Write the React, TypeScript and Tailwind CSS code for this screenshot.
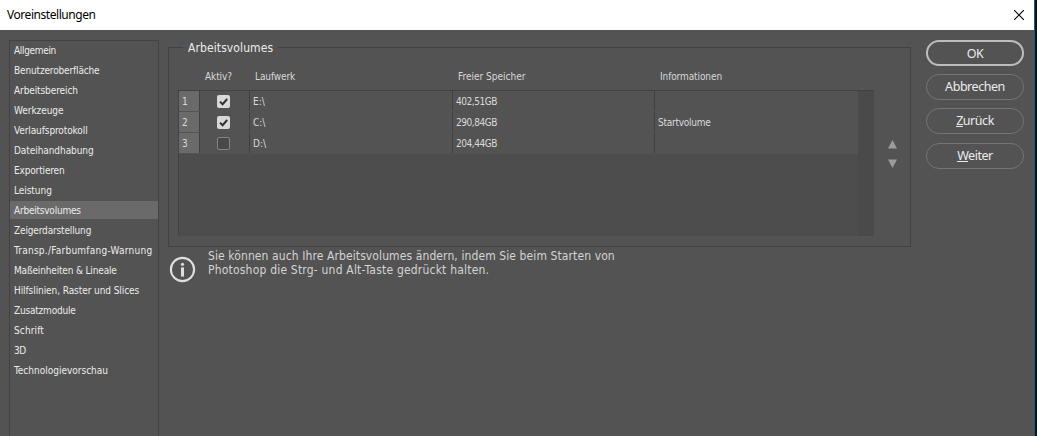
import { useState, type ReactNode } from "react";

type Volume = {
  id: number;
  drive: string;
  free: string;
  info: string;
};

const categories = [
  { name: "Allgemein", tracking: "tracking-[-0.33px]" },
  { name: "Benutzeroberfläche", tracking: "tracking-[-0.15px]" },
  { name: "Arbeitsbereich", tracking: "tracking-[-0.1px]" },
  { name: "Werkzeuge", tracking: "tracking-[-0.05px]" },
  { name: "Verlaufsprotokoll", tracking: "tracking-[-0.1px]" },
  { name: "Dateihandhabung", tracking: "tracking-[-0.07px]" },
  { name: "Exportieren", tracking: "tracking-[-0.15px]" },
  { name: "Leistung", tracking: "tracking-[-0.05px]" },
  { name: "Arbeitsvolumes", tracking: "tracking-[-0.22px]" },
  { name: "Zeigerdarstellung", tracking: "tracking-[-0.15px]" },
  { name: "Transp./Farbumfang-Warnung", tracking: "tracking-[0.25px]" },
  { name: "Maßeinheiten & Lineale", tracking: "tracking-[-0.16px]" },
  { name: "Hilfslinien, Raster und Slices", tracking: "tracking-[-0.08px]" },
  { name: "Zusatzmodule", tracking: "tracking-[-0.2px]" },
  { name: "Schrift", tracking: "tracking-[0.12px]" },
  { name: "3D", tracking: "tracking-[-0.5px]" },
  { name: "Technologievorschau", tracking: "tracking-normal" },
];

const volumes: Volume[] = [
  { id: 1, drive: "E:\\", free: "402,51GB", info: "" },
  { id: 2, drive: "C:\\", free: "290,84GB", info: "Startvolume" },
  { id: 3, drive: "D:\\", free: "204,44GB", info: "" },
];

function Checkbox({ checked, onClick }: { checked: boolean; onClick: () => void }) {
  return (
    <button
      role="checkbox"
      aria-checked={checked}
      onClick={onClick}
      className={`w-[13px] h-[13px] rounded-[2px] ${
        checked ? "bg-[#d8d8d8]" : "bg-[#484848] border border-[#858585]"
      }`}
    >
      {checked && (
        <svg viewBox="0 0 13 13" className="w-[13px] h-[13px]" fill="none" stroke="#303030" strokeWidth="2">
          <path d="M3 6.6 5.6 9.2 10.2 4" />
        </svg>
      )}
    </button>
  );
}

function DialogButton({ primary, children }: { primary?: boolean; children: ReactNode }) {
  return (
    <button
      className={`w-[98px] h-[26px] rounded-full text-center font-['Noto_Sans',sans-serif] text-[12.5px] tracking-[-0.45px] text-[#ececec] ${
        primary ? "border-2 border-[#bdbdbd] leading-[21px]" : "border border-[#747474] leading-[24px]"
      }`}
    >
      {children}
    </button>
  );
}

export default function App() {
  const [selected, setSelected] = useState("Arbeitsvolumes");
  const [active, setActive] = useState<number[]>([1, 2]);

  const toggle = (id: number) =>
    setActive(active.includes(id) ? active.filter((a) => a !== id) : [...active, id]);

  return (
    <div className="flex w-[1037px] h-[436px] overflow-hidden bg-[#06121f] font-['DejaVu_Sans_Condensed','DejaVu_Sans',sans-serif] whitespace-nowrap">
      <div className="w-[1034px] flex flex-col bg-[#535353]">
        {/* Title bar */}
        <div className="h-[30px] shrink-0 bg-white flex items-center justify-between pl-[7px] pr-[10px]">
          <h1 className="text-[12px] tracking-[-0.45px] text-black font-['Noto_Sans',sans-serif]">
            Voreinstellungen
          </h1>
          <button aria-label="Schließen">
            <svg viewBox="0 0 10 10" className="w-[10px] h-[10px]" stroke="#000" strokeWidth="1.1">
              <path d="M0 0 10 10M10 0 0 10" />
            </svg>
          </button>
        </div>

        <div className="flex-1 flex items-start pt-[10px] pl-[9px]">
          {/* Categories */}
          <nav className="w-[150px] h-[400px] shrink-0 border border-[#424242] text-[10px] text-[#ececec]">
            {categories.map(({ name, tracking }) => (
              <button
                key={name}
                onClick={() => setSelected(name)}
                className={`block w-full h-[18px] mb-[2px] pl-[4px] text-left leading-[19px] ${tracking} ${
                  selected === name ? "bg-[#6a6a6a]" : ""
                }`}
              >
                {name}
              </button>
            ))}
          </nav>

          <main className="w-[743px] shrink-0 ml-[9px]">
            <fieldset className="h-[207px] border border-[#424242] pl-[9px]">
              <legend className="ml-[5px] px-[5px] h-[15px] text-[12px] leading-[17px] tracking-[0.1px] text-[#ececec]">
                Arbeitsvolumes
              </legend>
              <div className="flex">
                <div className="w-[696px]">
                  <div className="flex h-[35px] pt-[14px] text-[10px] leading-[16px] tracking-[-0.1px] text-[#d8d8d8]">
                    <span className="w-[77px] pl-[27px]">Aktiv?</span>
                    <span className="w-[203px]">Laufwerk</span>
                    <span className="w-[202px] tracking-normal">Freier Speicher</span>
                    <span>Informationen</span>
                  </div>
                  <div className="h-[146px] flex border-t border-l border-[#424242] bg-[#4d4d4d]">
                    <div className="w-[679px]">
                      {volumes.map((v) => (
                        <div
                          key={v.id}
                          className="flex h-[21px] pb-px bg-[#535353] text-[10px] leading-[21px] text-[#dadada]"
                        >
                          <span className="w-[20px] pl-[3px] bg-[#6a6a6a]">{v.id}</span>
                          <span className="w-[50px] flex items-center border-l border-[#404040] pl-[17px]">
                            <Checkbox checked={active.includes(v.id)} onClick={() => toggle(v.id)} />
                          </span>
                          <span className="w-[203px] border-l border-[#404040] pl-[3px]">{v.drive}</span>
                          <span className="w-[202px] border-l border-[#404040] pl-[3px] tracking-[-0.45px]">
                            {v.free}
                          </span>
                          <span className="flex-1 border-l border-[#404040] pl-[3px] tracking-[-0.25px]">
                            {v.info}
                          </span>
                        </div>
                      ))}
                    </div>
                    <div className="flex-1 bg-[#4a4a4a]" />
                  </div>
                </div>
                <div className="flex flex-col gap-[10px] pl-[14px] pt-[85px]">
                  <svg viewBox="0 0 9 9" className="w-[9px] h-[9px]" fill="#9c9c9c">
                    <path d="M4.5 0 9 8.5H0z" />
                  </svg>
                  <svg viewBox="0 0 9 9" className="w-[9px] h-[9px]" fill="#9c9c9c">
                    <path d="M0 .5H9L4.5 9z" />
                  </svg>
                </div>
              </div>
            </fieldset>

            <div className="flex pl-px">
              <svg viewBox="0 0 27 27" className="w-[27px] h-[27px] mt-[9px]" fill="none">
                <circle cx="13.5" cy="13.5" r="11.6" stroke="#dedede" strokeWidth="2.1" />
                <circle cx="13.5" cy="8.3" r="1.6" fill="#dedede" />
                <path d="M12 11.4h3v9.2h-3z" fill="#dedede" />
              </svg>
              <p className="ml-[12px] mt-[2px] text-[12px] leading-[14px] tracking-[0.1px] text-[#d4d4d4]">
                Sie können auch Ihre Arbeitsvolumes ändern, indem Sie beim Starten von
                <br />
                <span className="tracking-[0.2px]">Photoshop die Strg- und Alt-Taste gedrückt halten.</span>
              </p>
            </div>
          </main>

          <div className="flex flex-col gap-[8px] ml-[15px]">
            <DialogButton primary>OK</DialogButton>
            <DialogButton>Abbrechen</DialogButton>
            <DialogButton>
              <u>Z</u>urück
            </DialogButton>
            <div className="pt-px flex">
              <DialogButton>
                <u>W</u>eiter
              </DialogButton>
            </div>
          </div>
        </div>
      </div>
      <div className="w-px bg-[#1f5c8e]" />
    </div>
  );
}
